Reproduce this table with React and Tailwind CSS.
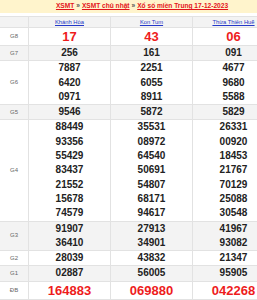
import React from "react";

const cols = [
  { name: "Khánh Hòa", g8: "17", g7: ["256"], g6: ["7887", "6420", "0971"], g5: ["9546"], g4: ["88449", "93356", "55429", "83437", "21552", "15678", "74579"], g3: ["91907", "36410"], g2: ["28039"], g1: ["02887"], db: "164883" },
  { name: "Kon Tum", g8: "43", g7: ["161"], g6: ["2251", "6055", "8911"], g5: ["5872"], g4: ["35531", "08972", "64540", "50691", "54807", "68171", "94617"], g3: ["27913", "34901"], g2: ["43832"], g1: ["56005"], db: "069880" },
  { name: "Thừa Thiên Huế", g8: "06", g7: ["091"], g6: ["4677", "9680", "5588"], g5: ["5829"], g4: ["26331", "00920", "18453", "21767", "70129", "25088", "30548"], g3: ["41967", "93082"], g2: ["21347"], g1: ["95905"], db: "042268" },
];

const rows = [
  { label: "G7", key: "g7", gray: true },
  { label: "G6", key: "g6", gray: false },
  { label: "G5", key: "g5", gray: true },
  { label: "G4", key: "g4", gray: false },
  { label: "G3", key: "g3", gray: true },
  { label: "G2", key: "g2", gray: false },
  { label: "G1", key: "g1", gray: true },
];

function Label({ children }) {
  return (
    <div className="w-[28px] shrink-0 flex items-center justify-center text-[6px] text-[#666]">
      {children}
    </div>
  );
}

export default function App() {
  return (
    <div className="w-[274px] bg-white" style={{ fontFamily: "'Liberation Sans', Arial, sans-serif" }}>
      <div className="h-[13px] bg-[#fff4cc] flex items-center justify-center pl-[10px] text-[6.6px] font-bold leading-none whitespace-nowrap">
        <span className="text-[#e3141b] underline">XSMT</span>
        <span className="text-[#555] mx-[2px]">»</span>
        <span className="text-[#e3141b] underline">XSMT chủ nhật</span>
        <span className="text-[#555] mx-[2px]">»</span>
        <span className="text-[#e3141b] underline">Xổ số miền Trung 17-12-2023</span>
      </div>
      <div className="mt-[3px] border-t border-[#e2e2e2]">
        <div className="flex h-[11px] bg-[#f3f3f3] border-b border-[#e2e2e2]">
          <Label></Label>
          {cols.map((c) => (
            <div key={c.name} className="w-[82px] shrink-0 border-l border-[#e2e2e2] flex items-center justify-center text-[5.8px] text-[#2438c8] underline">
              {c.name}
            </div>
          ))}
        </div>
        <div className="flex h-[18px] bg-white border-b border-[#e2e2e2]">
          <Label>G8</Label>
          {cols.map((c) => (
            <div key={c.name} className="w-[82px] shrink-0 border-l border-[#e2e2e2] flex items-center justify-center text-[13px] font-bold text-[#ee1c1c]">
              {c.g8}
            </div>
          ))}
        </div>
        {rows.map((r) => (
          <div key={r.key} className={`flex border-b border-[#e2e2e2] ${r.gray ? "bg-[#f3f3f3]" : "bg-white"}`}>
            <Label>{r.label}</Label>
            {cols.map((c) => (
              <div key={c.name} className="w-[82px] shrink-0 border-l border-[#e2e2e2] flex flex-col items-center text-[10px] font-bold text-[#222] leading-[14.3px]">
                {c[r.key].map((n, i) => (
                  <div key={i}>{n}</div>
                ))}
              </div>
            ))}
          </div>
        ))}
        <div className="flex h-[18px] bg-white border-b border-[#e2e2e2]">
          <Label>ĐB</Label>
          {cols.map((c) => (
            <div key={c.name} className="w-[82px] shrink-0 border-l border-[#e2e2e2] flex items-center justify-center text-[13px] font-bold text-[#ee1c1c]">
              {c.db}
            </div>
          ))}
        </div>
      </div>
    </div>
  );
}
